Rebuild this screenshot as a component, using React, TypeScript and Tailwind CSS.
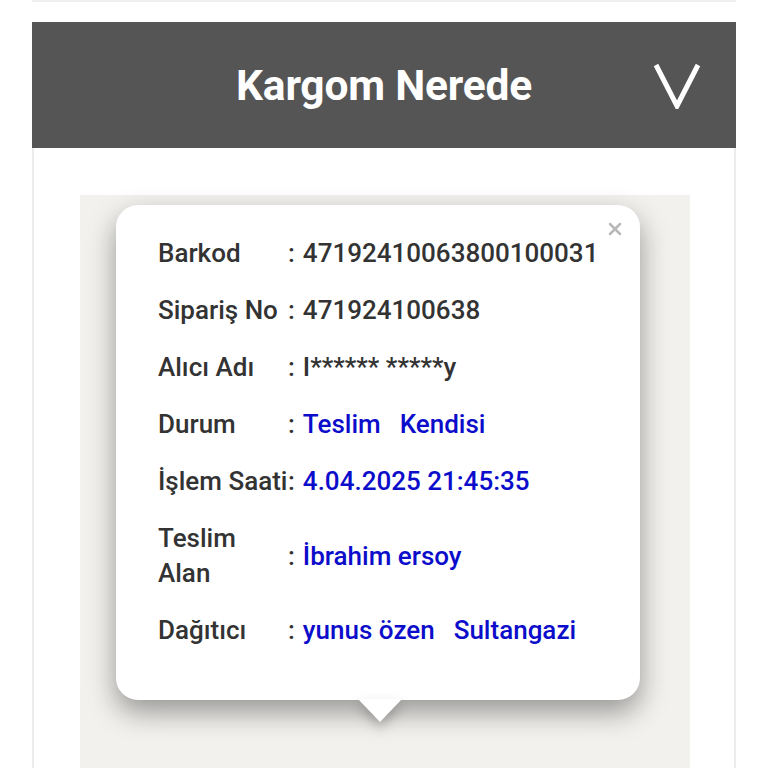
import { X } from 'lucide-react';

const rows: { label: React.ReactNode; value: React.ReactNode; blue?: boolean }[] = [
  { label: 'Barkod', value: '47192410063800100031' },
  { label: 'Sipariş No', value: '471924100638' },
  { label: 'Alıcı Adı', value: 'I****** *****y' },
  {
    label: 'Durum',
    value: (
      <>
        Teslim<span className="ml-[19px]">Kendisi</span>
      </>
    ),
    blue: true,
  },
  { label: 'İşlem Saati', value: '4.04.2025 21:45:35', blue: true },
  {
    label: (
      <>
        Teslim
        <br />
        Alan
      </>
    ),
    value: 'İbrahim ersoy',
    blue: true,
  },
  {
    label: 'Dağıtıcı',
    value: (
      <>
        yunus özen<span className="ml-[19px]">Sultangazi</span>
      </>
    ),
    blue: true,
  },
];

export default function App() {
  return (
    <div className="bg-white min-h-screen h-[768px] overflow-hidden" style={{ fontFamily: 'Roboto, "Liberation Sans", sans-serif' }}>
      <div className="mx-[32px] h-[2px] bg-[#efefef]" />
      <div className="mx-[32px] mt-[20px] border-x-2 border-[#ececec] h-[746px] flex flex-col">
        <div className="bg-[#555555] h-[126px] -mx-[2px] flex items-center justify-center relative shrink-0">
          <h1 className="text-white text-[42.5px] font-bold tracking-[-0.2px] pt-[2px]">Kargom Nerede</h1>
          <svg className="absolute left-[621px] top-[41px]" width="48" height="46" viewBox="0 0 48 46" fill="none">
            <polyline points="3,2 24,43 45,2" stroke="white" strokeWidth="5" strokeLinejoin="miter" />
          </svg>
        </div>
        <div className="flex-1 pt-[47px] pl-[46px] pr-[44px]">
          <div className="bg-[#f2f1ee] h-full pt-[10px] pl-[36px]">
            <div className="relative w-[524px] h-[495px] bg-white rounded-[22px] shadow-[0_12px_28px_rgba(0,0,0,0.38)] pl-[42px] pt-[20px]">
              <X className="absolute right-[15px] top-[14px] text-[#b8b8b8]" size={20} strokeWidth={3} />
              <div className="flex flex-col">
                {rows.map((r, i) => (
                  <div key={i} className="flex items-center py-[11px] text-[26px] leading-[35px] font-medium">
                    <div className="w-[130px] text-[#333333] whitespace-nowrap">{r.label}</div>
                    <div className={`whitespace-nowrap ${r.blue ? 'text-[#0c0ccb]' : 'text-[#333333]'}`}>
                      <span className="text-[#333333] mr-[8px]">:</span>
                      {r.value}
                    </div>
                  </div>
                ))}
              </div>
              <svg
                className="absolute left-[242px] top-[494px]"
                width="44"
                height="24"
                viewBox="0 0 44 24"
                style={{ filter: 'drop-shadow(0 6px 6px rgba(0,0,0,0.25))' }}
              >
                <polygon points="0,0 44,0 22,23" fill="white" />
              </svg>
            </div>
          </div>
        </div>
      </div>
    </div>
  );
}
